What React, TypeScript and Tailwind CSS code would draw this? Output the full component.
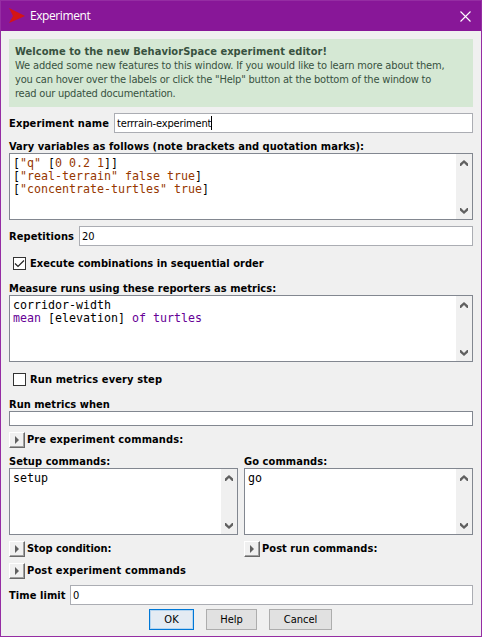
import type { ReactNode } from "react";

function Label({ children, className = "" }: { children: ReactNode; className?: string }) {
  return <span className={`whitespace-pre font-bold ${className}`}>{children}</span>;
}

function Arrow({ down = false }: { down?: boolean }) {
  return (
    <svg width="8" height="6" viewBox="0 0 8 6" className={down ? "rotate-180" : ""}>
      <path d="M0 3.6 L4 0 L8 3.6 V6 H7 L4 3 L1 6 H0 Z" fill="#606060" />
    </svg>
  );
}

function Editor({ children }: { children: ReactNode }) {
  return (
    <div className="flex h-[67px] border border-[#828790] bg-white">
      <div className="min-w-0 flex-1 whitespace-pre pl-[3px] pt-[3px] font-['DejaVu_Sans_Mono',monospace] text-[11.63px] leading-[13px] text-black">
        {children}
      </div>
      <div className="flex w-4 flex-col items-center justify-between bg-[#f0f0f0] pb-[5px] pr-px pt-[6px]">
        <Arrow />
        <Arrow down />
      </div>
    </div>
  );
}

function Field({ value = "", caret = false }: { value?: string; caret?: boolean }) {
  return (
    <div className="flex h-5 min-w-0 flex-1 items-center border border-[#abadb3] bg-white pl-[2px]">
      <span className="whitespace-pre pt-[2px] tracking-[-0.16px]">{value}</span>
      {caret && <span className="h-[14px] w-px bg-black" />}
    </div>
  );
}

function Check({ label, checked = false, className = "" }: { label: string; checked?: boolean; className?: string }) {
  return (
    <div className="flex h-[13px] items-center gap-1 pl-1">
      <div className="h-[13px] w-[13px] border border-[#333] bg-white">
        {checked && (
          <svg width="11" height="11" viewBox="0 0 11 11">
            <path d="M1 5.5 L4 8.5 L10 2.5" fill="none" stroke="#222" strokeWidth="1.2" />
          </svg>
        )}
      </div>
      <Label className={className}>{label}</Label>
    </div>
  );
}

function Disclosure({ label, className = "" }: { label: string; className?: string }) {
  return (
    <div className="flex h-4 items-center gap-[2px]">
      <div className="flex h-4 w-4 items-center justify-center border-b border-l border-r border-t border-b-[#696969] border-l-white border-r-[#696969] border-t-white bg-[#f0f0f0] shadow-[inset_-1px_-1px_0_#a0a0a0]">
        <svg width="4" height="8" viewBox="0 0 4 8">
          <path d="M0 0 L4 4 L0 8 Z" fill="#606060" />
        </svg>
      </div>
      <Label className={className}>{label}</Label>
    </div>
  );
}

function Brown({ children }: { children: ReactNode }) {
  return <span className="text-[#963700]">{children}</span>;
}

function Violet({ children }: { children: ReactNode }) {
  return <span className="text-[#660096]">{children}</span>;
}

export default function App() {
  return (
    <div className="flex h-[637px] w-[482px] flex-col border border-[#952da3] bg-[#f0f0f0] font-['DejaVu_Sans_Condensed','DejaVu_Sans',sans-serif] text-[11px] leading-[14px] text-black">
      <header className="flex h-[30px] shrink-0 items-center bg-[#881798] pl-2 pr-[10px] text-white">
        <svg width="16" height="16" viewBox="0 0 16 16">
          <path d="M0 0 L16 8 L0 15 L4 8 Z" fill="#d41515" />
        </svg>
        <span className="ml-[5px] flex-1 font-['Open_Sans',sans-serif] text-[12px] tracking-[-0.42px]">Experiment</span>
        <svg width="11" height="11" viewBox="0 0 11 11">
          <path d="M.5 .5 L10.5 10.5 M10.5 .5 L.5 10.5" stroke="#fff" strokeWidth="1.1" />
        </svg>
      </header>
      <main className="flex flex-col px-2 pt-2">
        <div className="flex h-[68px] flex-col whitespace-pre bg-[#d5e8d4] pl-[6px] pt-[6px] text-[#38523f]">
          <Label className="tracking-[0.06px]">Welcome to the new BehaviorSpace experiment editor!</Label>
          <span className="tracking-[-0.14px]">We added some new features to this window. If you would like to learn more about them,</span>
          <span className="tracking-[-0.195px]">you can hover over the labels or click the "Help" button at the bottom of the window to</span>
          <span className="tracking-[-0.22px]">read our updated documentation.</span>
        </div>
        <div className="mt-[6px] flex items-center">
          <Label className="w-[105px] pt-[2px] tracking-[0.12px]">Experiment name</Label>
          <Field value="terrrain-experiment" caret />
        </div>
        <Label className="mt-[6px] h-[14px] pt-px tracking-[0.05px]">Vary variables as follows (note brackets and quotation marks):</Label>
        <Editor>
          [<Brown>"q"</Brown> [<Brown>0 0.2 1</Brown>]]{"\n"}
          [<Brown>"real-terrain" false true</Brown>]{"\n"}
          [<Brown>"concentrate-turtles" true</Brown>]
        </Editor>
        <div className="mt-[6px] flex items-center">
          <Label className="w-[70px] pt-[2px] tracking-[0.09px]">Repetitions</Label>
          <Field value="20" />
        </div>
        <div className="mt-[11px]">
          <Check label="Execute combinations in sequential order" checked className="tracking-[0.03px]" />
        </div>
        <Label className="mt-[11px] h-[14px] pt-px tracking-[0.03px]">Measure runs using these reporters as metrics:</Label>
        <Editor>
          corridor-width{"\n"}
          <Violet>mean</Violet> [elevation] <Violet>of turtles</Violet>
        </Editor>
        <div className="mt-[11px]">
          <Check label="Run metrics every step" className="tracking-[0.12px]" />
        </div>
        <Label className="mt-[11px] h-[14px] pt-px tracking-[0.03px]">Run metrics when</Label>
        <div className="h-[15px] border border-[#828790] bg-white" />
        <div className="mt-[6px]">
          <Disclosure label="Pre experiment commands:" className="tracking-[0.11px]" />
        </div>
        <div className="mt-[6px] flex gap-[6px]">
          <div className="flex w-[229px] flex-col">
            <Label className="h-[14px] pt-px tracking-[0.08px]">Setup commands:</Label>
            <Editor>setup</Editor>
          </div>
          <div className="flex w-[229px] flex-col">
            <Label className="h-[14px] pt-px tracking-[0.08px]">Go commands:</Label>
            <Editor>go</Editor>
          </div>
        </div>
        <div className="mt-[6px] grid grid-cols-[235px_229px] gap-y-[6px]">
          <Disclosure label="Stop condition:" className="tracking-[-0.06px]" />
          <Disclosure label="Post run commands:" className="tracking-[0.05px]" />
          <Disclosure label="Post experiment commands" className="tracking-[0.15px]" />
        </div>
        <div className="mt-[6px] flex items-center">
          <Label className="w-[61px] pt-[2px] tracking-[0.08px]">Time limit</Label>
          <Field value="0" />
        </div>
        <div className="mt-1 flex justify-center gap-3 pr-px">
          <button className="h-[21px] w-[45px] border border-[#0078d7] bg-[#e4ebf3] shadow-[inset_0_0_0_1px_#b5d5f0]">OK</button>
          <button className="h-[21px] w-[51px] border border-[#adadad] bg-[#e1e1e1]">Help</button>
          <button className="h-[21px] w-[63px] border border-[#adadad] bg-[#e1e1e1]">Cancel</button>
        </div>
      </main>
    </div>
  );
}
